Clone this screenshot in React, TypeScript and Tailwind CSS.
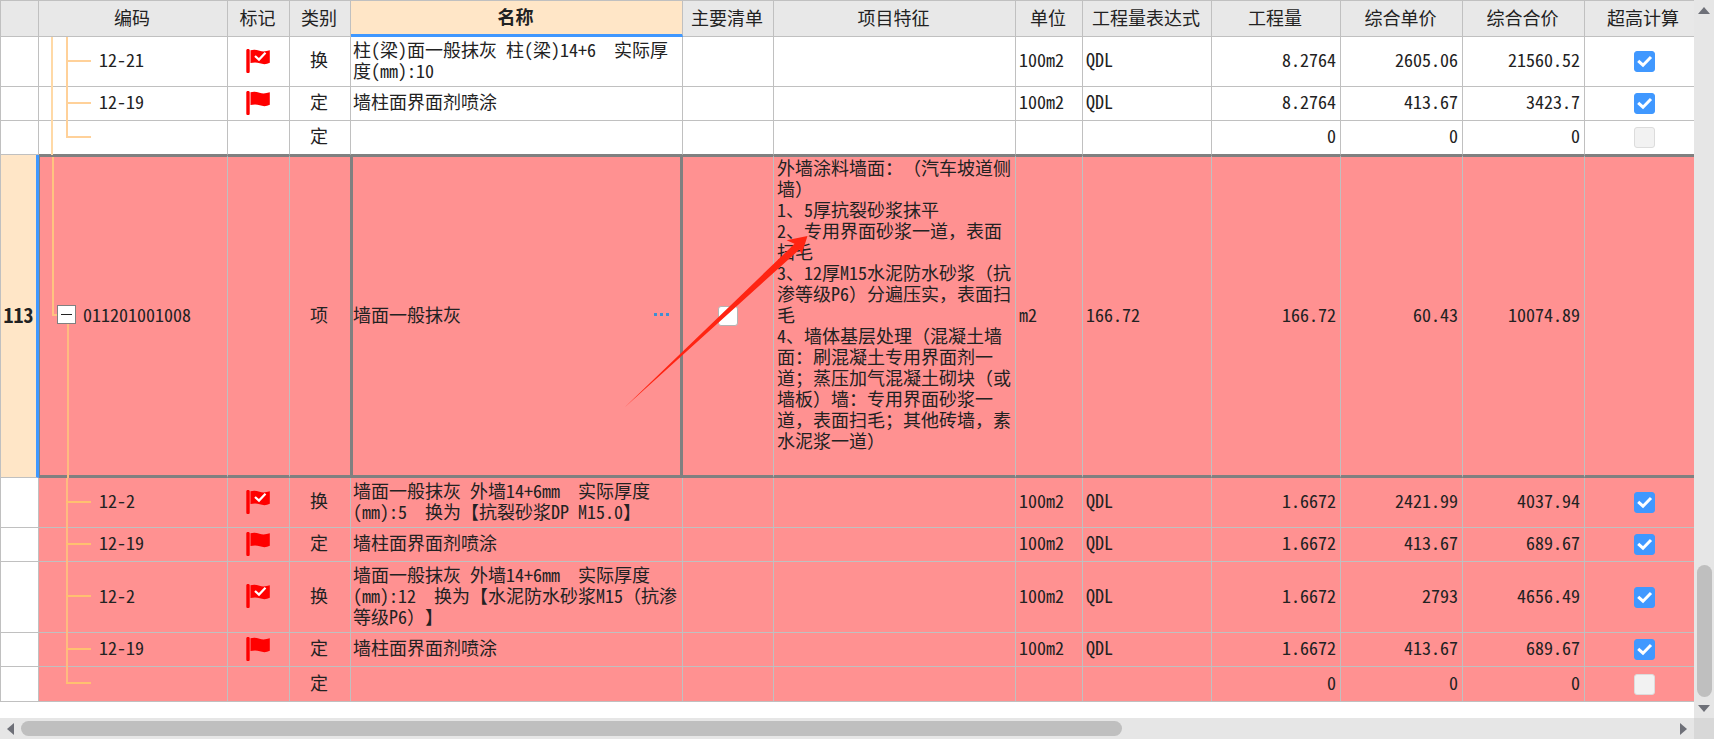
import { useState } from 'react';
import clsx from 'clsx';

type TreeShape = 'mid' | 'last' | 'parent';

interface Row {
  id: number;
  no?: string;
  height: string;
  tree: TreeShape;
  outer?: boolean; // línea del nivel superior
  code?: string;
  flag?: 'plain' | 'checked';
  kind: string;
  name?: string;
  feature?: string;
  unit?: string;
  expr?: string;
  qty: string;
  price: string;
  total: string;
  high?: boolean;
  red?: boolean;
  selected?: boolean;
}

const FEATURE = `外墙涂料墙面：（汽车坡道侧墙）
1、5厚抗裂砂浆抹平
2、专用界面砂浆一道，表面扫毛
3、12厚M15水泥防水砂浆（抗渗等级P6）分遍压实，表面扫毛
4、墙体基层处理（混凝土墙面：刷混凝土专用界面剂一道；蒸压加气混凝土砌块（或墙板）墙：专用界面砂浆一道，表面扫毛；其他砖墙，素水泥浆一道）`;

const rows: Row[] = [
  { id: 1, height: 'h-[50px]', tree: 'mid', outer: true, code: '12-21', flag: 'checked', kind: '换', name: '柱(梁)面一般抹灰 柱(梁)14+6  实际厚度(mm):10', unit: '100m2', expr: 'QDL', qty: '8.2764', price: '2605.06', total: '21560.52', high: true },
  { id: 2, height: 'h-[34px]', tree: 'mid', outer: true, code: '12-19', flag: 'plain', kind: '定', name: '墙柱面界面剂喷涂', unit: '100m2', expr: 'QDL', qty: '8.2764', price: '413.67', total: '3423.7', high: true },
  { id: 3, height: 'h-[34px]', tree: 'last', outer: true, kind: '定', qty: '0', price: '0', total: '0', high: false },
  { id: 4, no: '113', height: 'h-[323px]', tree: 'parent', code: '011201001008', kind: '项', name: '墙面一般抹灰', feature: FEATURE, unit: 'm2', expr: '166.72', qty: '166.72', price: '60.43', total: '10074.89', red: true, selected: true },
  { id: 5, height: 'h-[50px]', tree: 'mid', code: '12-2', flag: 'checked', kind: '换', name: '墙面一般抹灰 外墙14+6mm  实际厚度(mm):5  换为【抗裂砂浆DP M15.0】', unit: '100m2', expr: 'QDL', qty: '1.6672', price: '2421.99', total: '4037.94', high: true, red: true },
  { id: 6, height: 'h-[34px]', tree: 'mid', code: '12-19', flag: 'plain', kind: '定', name: '墙柱面界面剂喷涂', unit: '100m2', expr: 'QDL', qty: '1.6672', price: '413.67', total: '689.67', high: true, red: true },
  { id: 7, height: 'h-[71px]', tree: 'mid', code: '12-2', flag: 'checked', kind: '换', name: '墙面一般抹灰 外墙14+6mm  实际厚度(mm):12  换为【水泥防水砂浆M15（抗渗等级P6）】', unit: '100m2', expr: 'QDL', qty: '1.6672', price: '2793', total: '4656.49', high: true, red: true },
  { id: 8, height: 'h-[34px]', tree: 'mid', code: '12-19', flag: 'plain', kind: '定', name: '墙柱面界面剂喷涂', unit: '100m2', expr: 'QDL', qty: '1.6672', price: '413.67', total: '689.67', high: true, red: true },
  { id: 9, height: 'h-[35px]', tree: 'last', kind: '定', qty: '0', price: '0', total: '0', high: false, red: true }
];

const headers = ['编码', '标记', '类别', '名称', '主要清单', '项目特征', '单位', '工程量表达式', '工程量', '综合单价', '综合合价', '超高计算'];

function Flag({ checked }: { checked: boolean }) {
  return (
    <svg viewBox="0 0 24 24" className="mx-auto block h-6 w-6">
      <path d="M2 1.600v21" stroke="#f00" strokeWidth="3.400" strokeLinecap="round" />
      <path d="M4.500 1.200c3-.9 6-.6 9 .5s6.500 .8 10.300-.4v12.500c-3.500 1.800-7 1.600-10 .5s-6.300-1-9.300-.2z" fill="#f00" />
      {checked && <path d="M9 7l4 3.600 6.500-6.800" fill="none" stroke="#fff" strokeWidth="2.200" />}
    </svg>
  );
}

function HighCheck({ checked, label }: { checked: boolean; label: string }) {
  const [on, setOn] = useState(checked);
  return (
    <span className="relative mx-auto block h-[21px] w-[21px]">
      <input
        type="checkbox"
        aria-label={label}
        checked={on}
        disabled={!checked}
        onChange={e => setOn(e.target.checked)}
        className="block h-full w-full appearance-none rounded-[3px] border border-[#b4b4b4] bg-white checked:border-[#4098ff] checked:bg-[#4098ff] disabled:border-[#dcdcdc] disabled:bg-[#f2f2f2]"
      />
      {on && (
        <svg viewBox="0 0 21 21" className="pointer-events-none absolute inset-0">
          <path d="M4.200 9.800l4.800 4.400 8-8.200" fill="none" stroke="#fff" strokeWidth="3" />
        </svg>
      )}
    </span>
  );
}

function TreeLines({ shape, outer }: { shape: TreeShape; outer?: boolean }) {
  if (shape === 'parent') {
    return (
      <>
        <span className="absolute left-3 top-0 bottom-1/2 w-[6px] border-b-2 border-l-2 border-[#ffc380]" />
        <span className="absolute left-[27px] top-1/2 -bottom-[3px] w-[2px] bg-[#ffbb80]" />
      </>
    );
  }
  return (
    <>
      {outer && <span className="absolute left-3 top-0 -bottom-px w-[2px] bg-[#ffd9a6]" />}
      <span className={clsx('absolute left-[27px] top-0 w-[2px]', outer ? 'bg-[#ffd199]' : 'bg-[#ffbb80]', shape === 'last' ? 'bottom-1/2' : '-bottom-px')} />
      <span className={clsx('absolute left-[27px] bottom-1/2 h-[2px] w-[25px]', outer ? 'bg-[#ffd199]' : 'bg-[#ffc070]')} />
    </>
  );
}

function DataRow({ row, beforeSelected }: { row: Row; beforeSelected: boolean }) {
  const sel = row.selected;
  const cell = clsx(
    'border-r',
    sel ? 'border-t-2 border-b-[3px] border-t-[#808080] border-b-[#808080]' : 'border-b',
    !sel && (beforeSelected ? 'border-b-[#808080]' : 'border-b-[#c0c0c0]'),
    row.red ? 'bg-[#ff9191]' : 'bg-white'
  );
  const gray = 'border-r-[#c0c0c0]';
  const text = clsx(cell, gray, 'pb-1 pl-[3px] text-left');
  const num = clsx(cell, gray, 'pr-1 pb-1 text-right');

  return (
    <tr className={row.height}>
      <th
        scope="row"
        className={clsx(
          'border-b border-l border-[#c0c0c0] pb-1 text-center text-[20px] font-bold',
          sel ? 'border-r-[3px] border-r-[#4098ff] bg-[#ffe6c7]' : 'border-r bg-white'
        )}
      >
        {row.no}
      </th>
      <td className={clsx(cell, gray, 'relative pb-1', sel && 'border-l border-l-[#808080]')}>
        <TreeLines shape={row.tree} outer={row.outer} />
        {sel ? (
          <div className="relative flex items-center gap-[7px] pl-[17px]">
            <button aria-label="折叠" className="flex h-[19px] w-[19px] items-center justify-center border border-[#808080] bg-white">
              <span className="h-px w-[11px] bg-[#222]" />
            </button>
            {row.code}
          </div>
        ) : (
          <div className="pl-[60px]">{row.code}</div>
        )}
      </td>
      <td className={clsx(cell, gray, 'pr-[2px] pb-[2px]')}>{row.flag && <Flag checked={row.flag === 'checked'} />}</td>
      <td className={clsx(cell, sel ? 'border-r-[#808080]' : gray, 'pr-[2px] pb-1 text-center')}>{row.kind}</td>
      <td className={clsx(cell, 'pb-1', sel ? 'border-r-[3px] border-l-2 border-x-[#808080]' : [gray, 'pl-[2px]'])}>
        {sel ? (
          <div className="flex items-center justify-between pr-[11px]">
            <span>{row.name}</span>
            <button aria-label="更多" className="flex h-5 items-center gap-[3px]">
              <span className="h-[3px] w-[3px] bg-[#3f8fd2]" />
              <span className="h-[3px] w-[3px] bg-[#3f8fd2]" />
              <span className="h-[3px] w-[3px] bg-[#3f8fd2]" />
            </button>
          </div>
        ) : (
          row.name
        )}
      </td>
      <td className={clsx(cell, gray)}>
        {sel && (
          <input type="checkbox" aria-label="主要清单" className="mx-auto block h-5 w-5 appearance-none rounded-[3px] border border-[#b4b4b4] bg-white checked:bg-[#4098ff]" />
        )}
      </td>
      <td className={clsx(text, 'align-top')}>{row.feature}</td>
      <td className={text}>{row.unit}</td>
      <td className={text}>{row.expr}</td>
      <td className={num}>{row.qty}</td>
      <td className={num}>{row.price}</td>
      <td className={num}>{row.total}</td>
      <td className={clsx(cell, gray)}>
        {row.high !== undefined && <HighCheck checked={row.high} label={`超高计算 ${row.code ?? ''}`} />}
      </td>
    </tr>
  );
}

function App() {
  return (
    <div className="flex h-screen flex-col bg-white font-['Noto_Sans_Mono_CJK_SC','Noto_Sans_CJK_SC',monospace] text-[18px] leading-[21px] text-[#222] [text-spacing-trim:space-all]">
      <div className="flex min-h-0 flex-1">
        <div className="relative min-w-0 flex-1 overflow-hidden">
          {/* la última columna sigue fuera de la vista */}
          <table className="w-[calc(100%+10px)] min-w-[1500px] table-fixed border-separate border-spacing-0 whitespace-pre-wrap">
            <colgroup>
              <col className="w-[39px]" />
              <col className="w-[189px]" />
              <col className="w-[62px]" />
              <col className="w-[61px]" />
              <col />
              <col className="w-[91px]" />
              <col className="w-[242px]" />
              <col className="w-[67px]" />
              <col className="w-[129px]" />
              <col className="w-[129px]" />
              <col className="w-[122px]" />
              <col className="w-[122px]" />
              <col className="w-[119px]" />
            </colgroup>
            <thead>
              <tr className="h-[37px]">
                <td className="border border-[#c0c0c0] bg-[#e8e8e8]" />
                {headers.map(h => (
                  <th
                    key={h}
                    scope="col"
                    className={clsx(
                      'border-r border-t border-[#c0c0c0] pr-[2px] pb-[2px]',
                      h === '名称' ? 'border-b-[3px] border-b-[#4098ff] bg-[#ffe6c7] font-bold' : 'border-b bg-[#e8e8e8] font-normal'
                    )}
                  >
                    {h}
                  </th>
                ))}
              </tr>
            </thead>
            <tbody>
              {rows.map((row, i) => (
                <DataRow key={row.id} row={row} beforeSelected={!!rows[i + 1]?.selected} />
              ))}
            </tbody>
          </table>

          {/* Flecha de anotación */}
          <svg viewBox="0 0 184 172" className="pointer-events-none absolute left-[624px] top-[236px] h-[172px] w-[184px]">
            <path d="M0.500 171.500L170.500 7.800L162.500 4.300L183.500 0L177.600 18.500L175.500 13.500Z" fill="#ff2412" />
          </svg>
        </div>

        {/* Vertical scrollbar */}
        <div className="flex w-5 flex-col items-center justify-between bg-[#e6e6e6] pb-[6px] pt-[7px]">
          <button aria-label="向上">
            <svg viewBox="0 0 12 7" className="block h-[7px] w-3"><path d="M0 7L6 0l6 7z" fill="#6e7078" /></svg>
          </button>
          <div className="flex flex-col items-center gap-2">
            <div className="h-[132px] w-[15px] rounded-full bg-[#bfbfbf]" />
            <button aria-label="向下">
              <svg viewBox="0 0 12 7" className="block h-[7px] w-3"><path d="M0 0h12L6 7z" fill="#6e7078" /></svg>
            </button>
          </div>
        </div>
      </div>

      {/* Horizontal scrollbar */}
      <div className="flex h-[21px] shrink-0">
        <div className="flex min-w-0 flex-1 items-center gap-[7px] bg-[#e6e6e6] px-[7px]">
          <button aria-label="向左">
            <svg viewBox="0 0 7 12" className="block h-3 w-[7px]"><path d="M7 0v12L0 6z" fill="#6e7078" /></svg>
          </button>
          <div className="flex-1">
            <div className="h-[15px] w-2/3 rounded-full bg-[#bfbfbf]" />
          </div>
          <button aria-label="向右">
            <svg viewBox="0 0 7 12" className="block h-3 w-[7px]"><path d="M0 0v12l7-6z" fill="#6e7078" /></svg>
          </button>
        </div>
        <div className="w-5 bg-[#d8d8d8]" />
      </div>
    </div>
  );
}

export default App;
